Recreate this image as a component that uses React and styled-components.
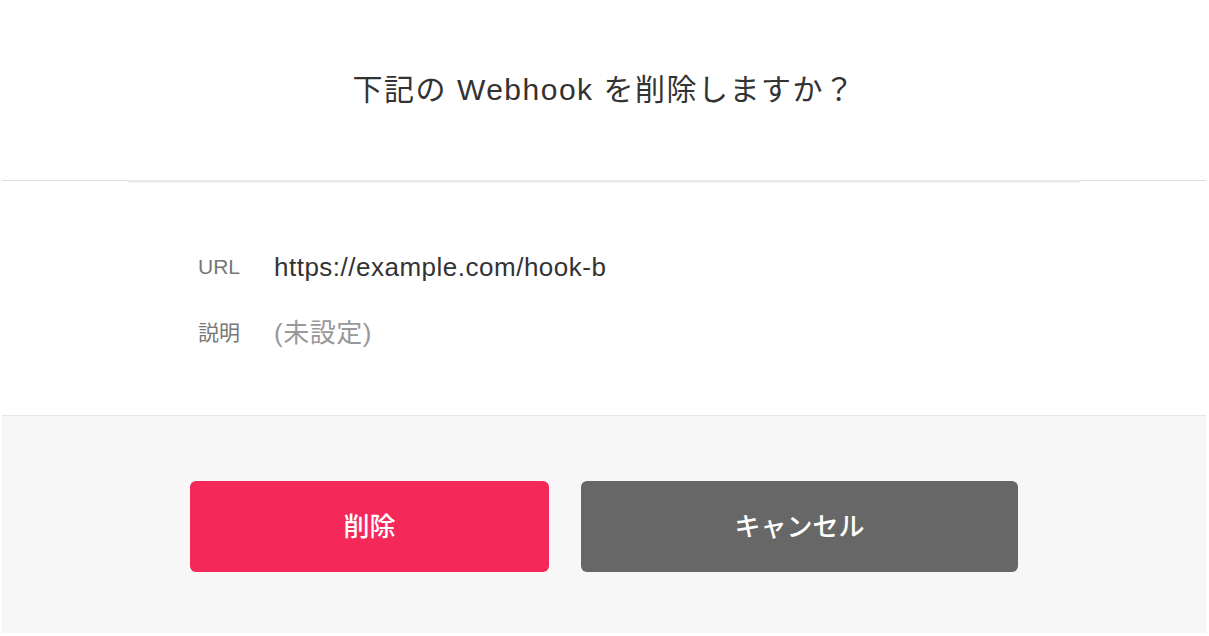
import React from 'react';
import styled, { createGlobalStyle } from 'styled-components';

const GlobalStyle = createGlobalStyle`
  html, body {
    margin: 0;
    padding: 0;
    background: #ffffff;
  }
  body {
    font-family: "Liberation Sans", "Noto Sans CJK JP", sans-serif;
    color: #333333;
  }
`;

const Modal = styled.div`
  width: 1204px;
  margin-left: 2px;
  background: #ffffff;
  display: flex;
  flex-direction: column;
`;

const Header = styled.header`
  height: 180px;
  display: flex;
  align-items: center;
  justify-content: center;
  border-bottom: 1px solid #dedede;
`;

const Title = styled.h1`
  margin: 0 0 6px;
  font-size: 30px;
  font-weight: normal;
  color: #333333;
  letter-spacing: 0.05em;
`;

const Rule = styled.div`
  height: 3px;
  margin: -1px 126px 0;
  background: linear-gradient(#e3e3e3, #f4f4f4);
`;

const Body = styled.div`
  display: grid;
  grid-template-columns: 76px 1fr;
  row-gap: 40px;
  align-items: center;
  padding: 71px 0 69px 196px;
  border-bottom: 1px solid #e6e6e6;
`;

const Label = styled.div`
  font-size: 21px;
  color: #777777;
  line-height: 26px;
`;

const Value = styled.div`
  font-size: 26px;
  line-height: 26px;
  letter-spacing: 0.5px;
  color: ${(p) => (p.muted ? '#999999' : '#333333')};
`;

const Footer = styled.footer`
  background: #f7f7f7;
  display: flex;
  justify-content: center;
  gap: 32px;
  padding: 65px 0 61px;
`;

const Button = styled.button`
  width: ${(p) => p.w}px;
  height: 91px;
  padding: 0 0 5px;
  border: none;
  border-radius: 6px;
  background: ${(p) => (p.danger ? '#f5285a' : '#676767')};
  color: #ffffff;
  font-family: "Noto Sans CJK JP", "Liberation Sans", sans-serif;
  font-size: 26px;
  font-weight: 500;
  cursor: pointer;
`;

export default function App() {
  return (
    <>
      <GlobalStyle />
      <Modal>
        <Header>
          <Title>下記の Webhook を削除しますか？</Title>
        </Header>
        <Rule />
        <Body>
          <Label>URL</Label>
          <Value>https://example.com/hook-b</Value>
          <Label>説明</Label>
          <Value muted>(未設定)</Value>
        </Body>
        <Footer>
          <Button danger w={359}>削除</Button>
          <Button w={437}>キャンセル</Button>
        </Footer>
      </Modal>
    </>
  );
}
